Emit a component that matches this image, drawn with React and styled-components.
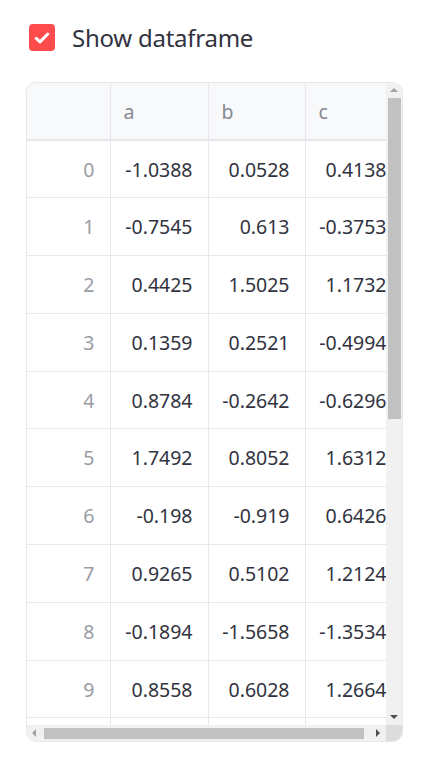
import React from "react";
import styled, { createGlobalStyle } from "styled-components";

const GlobalStyle = createGlobalStyle`
  body {
    margin: 0;
    background: #ffffff;
    font-family: "Noto Sans", sans-serif;
  }
`;

const Page = styled.div`
  padding: 24px 0 0 26px;
  width: 445px;
  height: 763px;
  box-sizing: border-box;
`;

const CheckRow = styled.label`
  display: flex;
  align-items: center;
  gap: 17px;
  margin-left: 3px;
  height: 27px;
`;

const Box = styled.span`
  width: 26px;
  height: 27px;
  border-radius: 4px;
  background: #ff4b4b;
  display: grid;
  place-items: center;
`;

const Label = styled.span`
  font-size: 24px;
  line-height: 27px;
  color: #31333f;
  letter-spacing: -0.25px;
`;

const Frame = styled.div`
  margin-top: 31px;
  width: 377px;
  height: 660px;
  box-sizing: border-box;
  border: 1px solid #e8e8ec;
  border-radius: 10px;
  overflow: hidden;
  display: grid;
  grid-template-columns: 1fr 16px;
  grid-template-rows: 1fr 16px;
`;

const Viewport = styled.div`
  overflow: hidden;
`;

const Table = styled.table`
  border-collapse: collapse;
  table-layout: fixed;
  width: 375px;
  font-size: 19.5px;
`;

const HeadCell = styled.th`
  height: 57px;
  background: #f8f9fb;
  color: #868993;
  font-weight: 400;
  text-align: left;
  padding: 0 13px;
  border-right: 1px solid #e8e8ec;
  border-bottom: 2px solid #e8e8ec;
  box-sizing: border-box;
`;

const Cell = styled.td`
  height: 57.8px;
  box-sizing: border-box;
  padding: 0 15px 0 0;
  text-align: right;
  color: ${(p) => (p.$index ? "#9a9ca4" : "#31333f")};
  border-right: 1px solid #e8e8ec;
  border-bottom: 1px solid #e8e8ec;
  white-space: nowrap;
  overflow: hidden;
`;

const VBar = styled.div`
  background: #f1f1f1;
  display: flex;
  flex-direction: column;
  align-items: center;
`;

const HBar = styled.div`
  background: #f1f1f1;
  display: flex;
  align-items: center;
`;

const Corner = styled.div`
  background: #dcdcdc;
`;

const ArrowUp = styled.span`
  margin-top: 5px;
  width: 0;
  height: 0;
  border-left: 4px solid transparent;
  border-right: 4px solid transparent;
  border-bottom: 4px solid ${(p) => p.$color};
`;

const ArrowDown = styled.span`
  margin-top: auto;
  margin-bottom: 6px;
  width: 0;
  height: 0;
  border-left: 4px solid transparent;
  border-right: 4px solid transparent;
  border-top: 4px solid ${(p) => p.$color};
`;

const ArrowLeft = styled.span`
  margin-left: 5px;
  width: 0;
  height: 0;
  border-top: 4px solid transparent;
  border-bottom: 4px solid transparent;
  border-right: 4px solid ${(p) => p.$color};
`;

const ArrowRight = styled.span`
  margin-left: auto;
  margin-right: 6px;
  width: 0;
  height: 0;
  border-top: 4px solid transparent;
  border-bottom: 4px solid transparent;
  border-left: 4px solid ${(p) => p.$color};
`;

const VThumb = styled.span`
  margin-top: 6px;
  width: 13px;
  height: 321px;
  background: #c1c1c1;
`;

const HThumb = styled.span`
  margin-left: 8px;
  width: 320px;
  height: 11px;
  background: #c1c1c1;
`;

const rows = [
  ["-1.0388", "0.0528", "0.4138"],
  ["-0.7545", "0.613", "-0.3753"],
  ["0.4425", "1.5025", "1.1732"],
  ["0.1359", "0.2521", "-0.4994"],
  ["0.8784", "-0.2642", "-0.6296"],
  ["1.7492", "0.8052", "1.6312"],
  ["-0.198", "-0.919", "0.6426"],
  ["0.9265", "0.5102", "1.2124"],
  ["-0.1894", "-1.5658", "-1.3534"],
  ["0.8558", "0.6028", "1.2664"],
];

export default function App() {
  return (
    <Page>
      <GlobalStyle />
      <CheckRow>
        <Box>
          <svg width="18" height="18" viewBox="0 0 18 18">
            <path
              d="M3.2 9.4l3.8 3.5L14.8 5"
              fill="none"
              stroke="#ffffff"
              strokeWidth="3"
              strokeLinecap="round"
              strokeLinejoin="round"
            />
          </svg>
        </Box>
        <Label>Show dataframe</Label>
      </CheckRow>
      <Frame>
        <Viewport>
          <Table>
            <colgroup>
              <col style={{ width: 83 }} />
              <col style={{ width: 98 }} />
              <col style={{ width: 97 }} />
              <col style={{ width: 97 }} />
            </colgroup>
            <thead>
              <tr>
                <HeadCell />
                <HeadCell>a</HeadCell>
                <HeadCell>b</HeadCell>
                <HeadCell>c</HeadCell>
              </tr>
            </thead>
            <tbody>
              {rows.map((r, i) => (
                <tr key={i}>
                  <Cell $index>{i}</Cell>
                  {r.map((v, j) => (
                    <Cell key={j}>{v}</Cell>
                  ))}
                </tr>
              ))}
              <tr>
                <Cell $index />
                <Cell />
                <Cell />
                <Cell />
              </tr>
            </tbody>
          </Table>
        </Viewport>
        <VBar>
          <ArrowUp $color="#a3a3a3" />
          <VThumb />
          <ArrowDown $color="#505050" />
        </VBar>
        <HBar>
          <ArrowLeft $color="#a3a3a3" />
          <HThumb />
          <ArrowRight $color="#505050" />
        </HBar>
        <Corner />
      </Frame>
    </Page>
  );
}
